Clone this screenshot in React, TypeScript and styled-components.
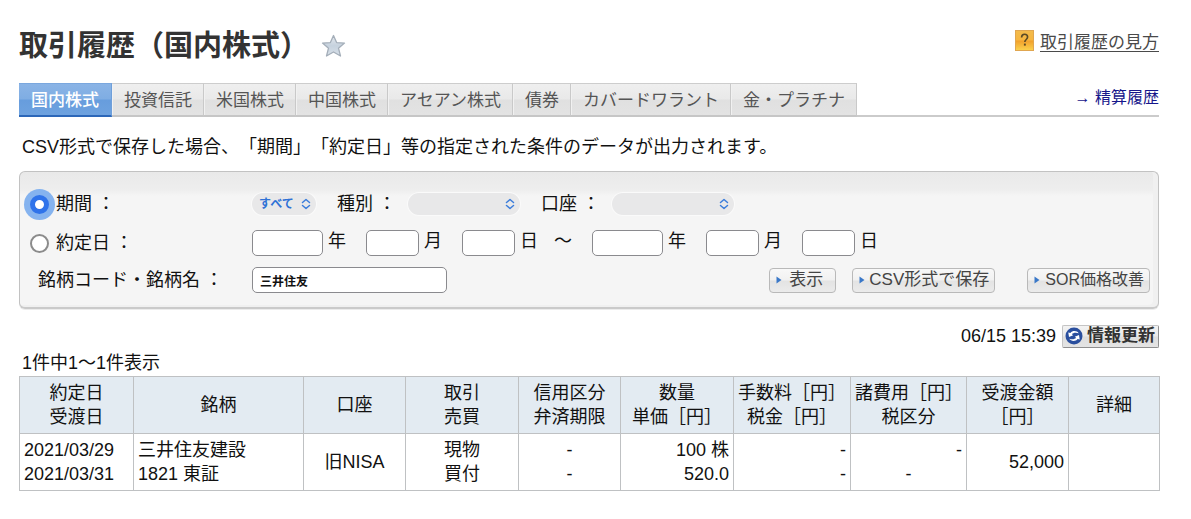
import React from "react";
import styled, { createGlobalStyle, css } from "styled-components";

const GlobalStyle = createGlobalStyle`
  *, *::before, *::after { box-sizing: border-box; }
  body {
    margin: 0;
    background: #fff;
    color: #111;
    font-family: "Liberation Sans", "Noto Sans CJK JP", sans-serif;
    font-size: 18px;
    line-height: 24px;
    text-spacing-trim: space-all;
  }
  button, input, select { font-family: inherit; }
`;

const Page = styled.main`
  padding: 26px 32px 24px 19px;
`;

const Header = styled.header`
  display: flex;
  align-items: flex-start;
  justify-content: space-between;
`;

const TitleGroup = styled.div`
  display: flex;
  align-items: center;
  gap: 12px;
`;

const Title = styled.h1`
  margin: 0;
  color: #333;
  font-size: 29px;
  line-height: 40px;
  font-weight: 700;
  white-space: nowrap;
`;

const StarButton = styled.button`
  display: flex;
  padding: 0;
  border: 0;
  background: none;
`;

const HelpLink = styled.a`
  display: flex;
  align-items: center;
  gap: 6px;
  padding-top: 4px;
  color: #4a4a4a;
  font-size: 17px;
  line-height: 24px;
  text-decoration: none;
  white-space: nowrap;
  span { text-decoration: underline; text-underline-offset: 3px; text-decoration-thickness: 1px; }
  svg { margin-bottom: 4px; }
`;

const TabBar = styled.div`
  display: flex;
  justify-content: space-between;
  margin-top: 17px;
  border-bottom: 2px solid #cbcbcb;
`;

const Tabs = styled.nav`
  display: flex;
  margin-bottom: -2px;
`;

const Tab = styled.a<{ $active?: boolean }>`
  height: 34px;
  padding: 0 11px 0 12px;
  border-top: 1px solid #cdcdcd;
  border-right: 1px solid #c9c9c9;
  border-bottom: 2px solid #c6c6c6;
  background: linear-gradient(#efefef 0, #e9e9e9 48%, #e0e0e0 52%, #e3e3e3 100%);
  box-shadow: inset 1px 0 #f1f1f1;
  color: #555;
  font-size: 17px;
  line-height: 34px;
  text-decoration: none;
  white-space: nowrap;
  ${({ $active }) =>
    $active &&
    css`
      padding: 0 12px;
      border-color: #7aa7de #6f9fda #2c67b8;
      background: linear-gradient(#8ab4e6 0, #7fade3 48%, #679ddd 52%, #6ea2df 100%);
      box-shadow: none;
      color: #fff;
      font-weight: 500;
    `}
`;

const SettlementLink = styled.a`
  padding-top: 3px;
  color: #16168a;
  font-size: 16px;
  text-decoration: none;
  white-space: nowrap;
`;

const Note = styled.p`
  margin: 18px 0 12px 3px;
`;

const Panel = styled.form`
  display: grid;
  gap: 12px;
  padding: 19px 8px 14px 10px;
  border: 1px solid #c2c2c2;
  border-bottom: 2px solid #cacaca;
  border-radius: 6px;
  background: linear-gradient(#e9e9e9 0, #eeeeee 18px, #f5f5f5 24px, #f5f5f5 100%);
  box-shadow: inset -5px -2px #f0f0f0, 0 1px #ececec;
`;

const FormRow = styled.div`
  display: grid;
  grid-template-columns: 222px 1fr;
  align-items: center;
  height: 26px;
`;

const RowLabel = styled.label<{ $indent?: boolean }>`
  display: flex;
  align-items: center;
  gap: 7px;
  padding-left: ${({ $indent }) => ($indent ? 8 : 0)}px;
  white-space: nowrap;
`;

const Radio = styled.input`
  appearance: none;
  flex: none;
  width: 19px;
  height: 19px;
  margin: 0;
  border: 2px solid #8b8b8b;
  border-radius: 50%;
  background: #fff;
  &:checked {
    border: 5px solid #2f73ea;
    box-shadow: 0 0 0 6px #85b3ef;
  }
`;

const Controls = styled.div`
  display: flex;
  align-items: center;
  white-space: nowrap;
`;

const Field = styled.label`
  display: flex;
  align-items: center;
  gap: 12px;
  margin-left: 21px;
`;

const SelectBox = styled.span<{ $width: number }>`
  display: grid;
  align-items: center;
  width: ${({ $width }) => $width}px;
  > * { grid-area: 1 / 1; }
  > svg { justify-self: end; margin-right: 5px; pointer-events: none; }
`;

const Select = styled.select`
  appearance: none;
  width: 100%;
  height: 22px;
  padding: 0 18px 0 7px;
  border: 0;
  border-radius: 11px;
  background: #e8e8e9;
  box-shadow: 0 0 0 1px #fafafa;
  color: #2f72d6;
  font-size: 12px;
  font-weight: 700;
`;

const TextInput = styled.input<{ $width: number }>`
  width: ${({ $width }) => $width}px;
  height: 26px;
  padding: 0 7px;
  border: 1px solid #8a8a8e;
  border-radius: 5px;
  background: #fff;
  color: #111;
  font-size: 12px;
  font-weight: 700;
`;

const DateGroup = styled.div`
  display: flex;
  gap: 20px;
`;

const DateField = styled.label`
  display: flex;
  align-items: center;
  gap: 5px;
  span { margin-bottom: 4px; }
`;

const Tilde = styled.span`
  margin: 0 20px 4px 16px;
`;

const SearchLine = styled.div`
  display: flex;
  align-items: center;
  justify-content: space-between;
`;

const Actions = styled.div`
  display: flex;
  gap: 16px;
`;

const ActionButton = styled.button<{ $small?: boolean; $apart?: boolean }>`
  display: flex;
  align-items: center;
  gap: ${({ $small }) => ($small ? 5 : 4)}px;
  height: 25px;
  margin-left: ${({ $apart }) => ($apart ? 16 : 0)}px;
  padding: 0 5px 0 6px;
  border: 1px solid #b9b9b9;
  border-radius: 4px;
  background: linear-gradient(#f8f8f8 0, #f1f1f1 48%, #e3e3e3 52%, #ebebeb 100%);
  color: #444;
  font-size: ${({ $small }) => ($small ? 16 : 17)}px;
  line-height: 22px;
  white-space: nowrap;
`;

const Narrow = styled.span`
  padding: 0 7px 0 3px;
`;

const StatusBar = styled.div`
  display: flex;
  align-items: center;
  justify-content: flex-end;
  gap: 6px;
  margin-top: 15px;
`;

const RefreshButton = styled.button`
  display: flex;
  align-items: center;
  gap: 4px;
  height: 23px;
  padding: 0 3px 0 2px;
  border: 1px solid #8f8f8f;
  border-color: #c4c4c4 #8f8f8f #8f8f8f #c4c4c4;
  border-radius: 2px;
  background: linear-gradient(#f3f3f3 0, #e9e9e9 48%, #dedede 52%, #e4e4e4 100%);
  color: #333;
  font-size: 17px;
  font-weight: 700;
  line-height: 20px;
  white-space: nowrap;
`;

const Count = styled.p`
  margin: 3px 0 1px 3px;
`;

const HistoryTable = styled.table`
  width: 100%;
  table-layout: fixed;
  border-collapse: collapse;
  th, td {
    height: 57px;
    padding: 4px;
    border: 1px solid #bfc1c3;
    white-space: nowrap;
  }
  th {
    background: #e3ebf2;
    font-weight: 400;
    text-align: center;
  }
`;

const Cell = styled.td<{ $align?: "left" | "center" | "right" }>`
  text-align: ${({ $align = "left" }) => $align};
`;

const Line = styled.div<{ $center?: boolean }>`
  ${({ $center }) => $center && "text-align: center;"}
`;

const Star = () => (
  <svg width="25" height="24" viewBox="0 0 25 24" aria-hidden="true">
    <defs>
      <linearGradient id="star" x1="0" y1="0" x2="0" y2="1">
        <stop offset="0" stopColor="#e6eaee" />
        <stop offset="0.5" stopColor="#c6d2de" />
        <stop offset="1" stopColor="#d9e1e9" />
      </linearGradient>
    </defs>
    <path
      d="M12.5 1.5 15.6 8.6 23.5 9.1 17.5 14.2 19.5 22 12.5 18 5.5 22 7.5 14.2 1.5 9.1 9.4 8.6Z"
      fill="url(#star)"
      stroke="#a4aeb9"
      strokeWidth="1.3"
      strokeLinejoin="round"
    />
  </svg>
);

const HelpIcon = () => (
  <svg width="19" height="21" viewBox="0 0 19 21" aria-hidden="true">
    <defs>
      <linearGradient id="help" x1="0" y1="0" x2="0" y2="1">
        <stop offset="0" stopColor="#f3bb4c" />
        <stop offset="0.48" stopColor="#f6b640" />
        <stop offset="0.52" stopColor="#f1a02c" />
        <stop offset="1" stopColor="#fbd34e" />
      </linearGradient>
    </defs>
    <rect x="0.5" y="0.5" width="18" height="20" fill="url(#help)" stroke="#e0a650" />
    <path
      d="M6.6 7.6C6.6 5.4 7.8 4.3 9.6 4.3s3 1.1 3 2.8c0 2.2-2.8 2.6-2.8 5"
      fill="none"
      stroke="#5b4a26"
      strokeWidth="1.6"
    />
    <rect x="8.9" y="13.6" width="1.9" height="2" fill="#5b4a26" />
  </svg>
);

const Chevrons = () => (
  <svg width="10" height="12" viewBox="0 0 10 12" aria-hidden="true">
    <path
      d="M1.5 4.5 5 1.5l3.5 3M1.5 7.5 5 10.5l3.5-3"
      fill="none"
      stroke="#3b7ddb"
      strokeWidth="1.5"
      strokeLinecap="round"
      strokeLinejoin="round"
    />
  </svg>
);

const Marker = () => (
  <svg width="6" height="8" viewBox="0 0 6 8" aria-hidden="true">
    <path d="M0.5 0.5 5.5 4 0.5 7.5Z" fill="#3a78c8" />
  </svg>
);

const RefreshIcon = () => (
  <svg width="18" height="18" viewBox="0 0 18 18" aria-hidden="true">
    <circle cx="9" cy="9" r="8.5" fill="#2a4f9e" />
    <path d="M13.7 6.2C12.2 3.7 7.4 3.2 5.4 6.1L3.3 5.5 4 10 8.2 8.2 6.9 7.2C8 5.7 10.8 5.2 13.7 6.2Z" fill="#fff" />
    <path d="M4.3 11.8c1.5 2.5 6.3 3 8.3.1l2.1.6L14 8 9.8 9.8l1.3 1c-1.1 1.5-3.9 2-6.8 1Z" fill="#fff" />
  </svg>
);

const tabs = ["国内株式", "投資信託", "米国株式", "中国株式", "アセアン株式", "債券", "カバードワラント", "金・プラチナ"];

const columns: { width: number; lines: string[] }[] = [
  { width: 114, lines: ["約定日", "受渡日"] },
  { width: 170, lines: ["銘柄"] },
  { width: 102, lines: ["口座"] },
  { width: 113, lines: ["取引", "売買"] },
  { width: 102, lines: ["信用区分", "弁済期限"] },
  { width: 113, lines: ["数量", "単価［円］"] },
  { width: 117, lines: ["手数料［円］", "税金［円］"] },
  { width: 116, lines: ["諸費用［円］", "税区分"] },
  { width: 102, lines: ["受渡金額", "［円］"] },
  { width: 91, lines: ["詳細"] },
];

const DateInputs = ({ name }: { name: string }) => (
  <DateGroup>
    <DateField>
      <TextInput $width={71} name={`${name}-year`} />
      <span>年</span>
    </DateField>
    <DateField>
      <TextInput $width={53} name={`${name}-month`} />
      <span>月</span>
    </DateField>
    <DateField>
      <TextInput $width={53} name={`${name}-day`} />
      <span>日</span>
    </DateField>
  </DateGroup>
);

export default function App() {
  return (
    <>
      <GlobalStyle />
      <Page lang="ja">
        <Header>
          <TitleGroup>
            <Title>取引履歴（国内株式）</Title>
            <StarButton type="button" aria-label="お気に入り">
              <Star />
            </StarButton>
          </TitleGroup>
          <HelpLink href="#help">
            <HelpIcon />
            <span>取引履歴の見方</span>
          </HelpLink>
        </Header>

        <TabBar>
          <Tabs>
            {tabs.map((label, i) => (
              <Tab key={label} href="#tab" $active={i === 0}>
                {label}
              </Tab>
            ))}
          </Tabs>
          <SettlementLink href="#settlement">→ 精算履歴</SettlementLink>
        </TabBar>

        <Note>CSV形式で保存した場合、「期間」「約定日」等の指定された条件のデータが出力されます。</Note>

        <Panel onSubmit={(e) => e.preventDefault()}>
          <FormRow>
            <RowLabel>
              <Radio type="radio" name="mode" defaultChecked />
              期間 ：
            </RowLabel>
            <Controls>
              <SelectBox $width={64}>
                <Select aria-label="期間">
                  <option>すべて</option>
                </Select>
                <Chevrons />
              </SelectBox>
              <Field>
                種別 ：
                <SelectBox $width={112}>
                  <Select>
                    <option></option>
                  </Select>
                  <Chevrons />
                </SelectBox>
              </Field>
              <Field>
                口座 ：
                <SelectBox $width={122}>
                  <Select>
                    <option></option>
                  </Select>
                  <Chevrons />
                </SelectBox>
              </Field>
            </Controls>
          </FormRow>
          <FormRow>
            <RowLabel>
              <Radio type="radio" name="mode" />
              約定日 ：
            </RowLabel>
            <Controls>
              <DateInputs name="from" />
              <Tilde>～</Tilde>
              <DateInputs name="to" />
            </Controls>
          </FormRow>
          <FormRow>
            <RowLabel $indent htmlFor="stock">
              銘柄コード・銘柄名 ：
            </RowLabel>
            <SearchLine>
              <TextInput $width={195} id="stock" defaultValue="三井住友" />
              <Actions>
                <ActionButton type="submit">
                  <Marker />
                  <Narrow>表示</Narrow>
                </ActionButton>
                <ActionButton type="button">
                  <Marker />
                  CSV形式で保存
                </ActionButton>
                <ActionButton type="button" $small $apart>
                  <Marker />
                  SOR価格改善
                </ActionButton>
              </Actions>
            </SearchLine>
          </FormRow>
        </Panel>

        <StatusBar>
          <time>06/15 15:39</time>
          <RefreshButton type="button">
            <RefreshIcon />
            情報更新
          </RefreshButton>
        </StatusBar>

        <Count>1件中1～1件表示</Count>
        <HistoryTable>
          <colgroup>
            {columns.map((c) => (
              <col key={c.lines[0]} width={c.width} />
            ))}
          </colgroup>
          <thead>
            <tr>
              {columns.map((c) => (
                <th key={c.lines[0]} scope="col">
                  {c.lines.map((line) => (
                    <Line key={line}>{line}</Line>
                  ))}
                </th>
              ))}
            </tr>
          </thead>
          <tbody>
            <tr>
              <Cell>
                <Line>2021/03/29</Line>
                <Line>2021/03/31</Line>
              </Cell>
              <Cell>
                <Line>三井住友建設</Line>
                <Line>1821 東証</Line>
              </Cell>
              <Cell $align="center">旧NISA</Cell>
              <Cell $align="center">
                <Line>現物</Line>
                <Line>買付</Line>
              </Cell>
              <Cell $align="center">
                <Line>-</Line>
                <Line>-</Line>
              </Cell>
              <Cell $align="right">
                <Line>100 株</Line>
                <Line>520.0</Line>
              </Cell>
              <Cell $align="right">
                <Line>-</Line>
                <Line>-</Line>
              </Cell>
              <Cell $align="right">
                <Line>-</Line>
                <Line $center>-</Line>
              </Cell>
              <Cell $align="right">52,000</Cell>
              <Cell />
            </tr>
          </tbody>
        </HistoryTable>
      </Page>
    </>
  );
}
